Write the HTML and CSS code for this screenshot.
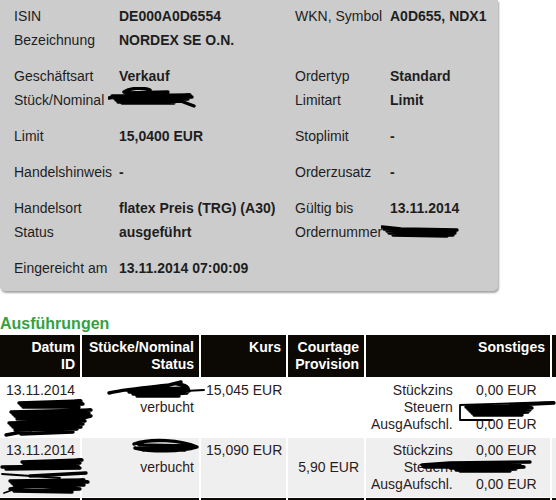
FILE: index.html
```html
<!DOCTYPE html>
<html lang="de">
<head>
    <meta charset="UTF-8">
    <meta name="viewport" content="width=device-width, initial-scale=1.0">
    <title>Orderdetails</title>
    <link rel="stylesheet" href="styles.css">
</head>
<body>
    <!-- Order details -->
    <div class="order-box">
        <table class="details">
            <colgroup>
                <col class="col-label">
                <col class="col-value">
                <col class="col-label2">
                <col class="col-value2">
            </colgroup>
            <tr>
                <td>ISIN</td>
                <td class="value">DE000A0D6554</td>
                <td>WKN, Symbol</td>
                <td class="value">A0D655, NDX1</td>
            </tr>
            <tr>
                <td>Bezeichnung</td>
                <td class="value">NORDEX SE O.N.</td>
                <td></td>
                <td></td>
            </tr>
            <tr class="group-start">
                <td>Geschäftsart</td>
                <td class="value">Verkauf</td>
                <td>Ordertyp</td>
                <td class="value">Standard</td>
            </tr>
            <tr>
                <td>Stück/Nominal</td>
                <td class="value">
                    <span class="redacted">
                        <svg class="scribble s-nominal" width="88" height="21" viewBox="0 0 88 21">
                            <path d="M1 11 L12 9 M16 5 C22 1, 34 0, 42 3 M4 9 L82 8 L6 11 L84 10 L8 13 L80 12 L10 15 L76 14 L14 16 L66 16 M18 6 L60 5 M70 13 L86 19" />
                        </svg>
                    </span>
                </td>
                <td>Limitart</td>
                <td class="value">Limit</td>
            </tr>
            <tr class="group-start">
                <td>Limit</td>
                <td class="value">15,0400 EUR</td>
                <td>Stoplimit</td>
                <td class="value">-</td>
            </tr>
            <tr class="group-start">
                <td>Handelshinweis</td>
                <td class="value">-</td>
                <td>Orderzusatz</td>
                <td class="value">-</td>
            </tr>
            <tr class="group-start">
                <td>Handelsort</td>
                <td class="value">flatex Preis (TRG) (A30)</td>
                <td>Gültig bis</td>
                <td class="value">13.11.2014</td>
            </tr>
            <tr>
                <td>Status</td>
                <td class="value">ausgeführt</td>
                <td>Ordernummer</td>
                <td class="value">
                    <span class="redacted">
                        <svg class="scribble s-ordernr" width="78" height="14" viewBox="0 0 78 14">
                            <path d="M1 2 L20 4 L76 5 M3 4 L74 6 L6 6 L74 8 L8 8 L72 10 L12 10 L66 11" />
                        </svg>
                    </span>
                </td>
            </tr>
            <tr class="group-start">
                <td>Eingereicht am</td>
                <td class="value">13.11.2014 07:00:09</td>
                <td></td>
                <td></td>
            </tr>
        </table>
    </div>

    <!-- Executions -->
    <h3 class="section-title">Ausführungen</h3>
    <table class="executions">
        <colgroup>
            <col class="col-date">
            <col class="col-amount">
            <col class="col-rate">
            <col class="col-fee">
            <col class="col-extras">
            <col class="col-more">
        </colgroup>
        <thead>
            <tr>
                <th>Datum<br>ID</th>
                <th>Stücke/Nominal<br>Status</th>
                <th>Kurs</th>
                <th>Courtage<br>Provision</th>
                <th>Sonstiges</th>
                <th></th>
            </tr>
        </thead>
        <tbody>
            <tr>
                <td>
                    13.11.2014
                    <span class="redacted">
                        <svg class="scribble s-id1" width="92" height="40" viewBox="0 0 92 40">
                            <path d="M16 5 L78 3 L18 7 L80 6 L20 9 L76 9 M8 14 L88 12 L10 16 L86 15 L12 18 L84 18 L14 21 L80 21 M6 25 L82 23 L8 27 L80 26 L10 29 L78 29 L12 32 L74 31 M3 37 L40 30 L88 18 M18 36 L70 34" />
                        </svg>
                    </span>
                </td>
                <td>
                    <span class="redacted">
                        <svg class="scribble s-amount1" width="98" height="20" viewBox="0 0 98 20">
                            <path d="M2 13 C20 9, 44 7, 62 5 L74 2 M20 10 L80 8 L22 12 L82 11 L26 14 L80 13 L30 16 L72 16 M70 4 C82 5, 84 10, 78 13" />
                            <path class="thin" d="M78 11 L97 10" />
                        </svg>
                    </span>
                    verbucht
                </td>
                <td>15,045 EUR</td>
                <td class="fee"></td>
                <td>
                    <div class="extras">
                        <span>Stückzins</span><span>0,00 EUR</span>
                        <span>Steuern</span>
                        <span class="redacted">
                            <svg class="scribble s-tax1" width="104" height="24" viewBox="0 0 104 24">
                                <path class="thin" d="M8 5 L8 20 L40 20 M8 5 L102 2" />
                                <path d="M14 7 L78 5 L16 9 L80 8 L18 11 L78 10 L20 13 L76 12 L22 15 L70 15 M60 5 L102 3" />
                            </svg>
                        </span>
                        <span>AusgAufschl.</span><span>0,00 EUR</span>
                    </div>
                </td>
                <td></td>
            </tr>
            <tr>
                <td>
                    13.11.2014
                    <span class="redacted">
                        <svg class="scribble s-id2" width="92" height="38" viewBox="0 0 92 38">
                            <path d="M22 4 L82 2 L24 6 L80 5 L26 8 L78 8 M2 9 L76 8 L6 11 L80 10 M30 18 L86 15 M10 23 L84 22 L12 25 L88 24 L14 27 L84 27 M10 31 C30 27, 60 28, 80 31 L14 33 L72 34" />
                            <path class="thin" d="M2 16 L60 20 M4 35 L40 22" />
                        </svg>
                    </span>
                </td>
                <td>
                    <span class="redacted">
                        <svg class="scribble s-amount2" width="68" height="19" viewBox="0 0 68 19">
                            <path d="M3 6 C20 0, 50 2, 66 9 C50 14, 20 14, 4 10 M8 7 L60 8 L10 10 L58 10 L12 12 L54 12" />
                        </svg>
                    </span>
                    verbucht
                </td>
                <td>15,090 EUR</td>
                <td class="fee">5,90 EUR</td>
                <td>
                    <div class="extras">
                        <span>Stückzins</span><span>0,00 EUR</span>
                        <span>Steuern</span>
                        <span class="redacted">
                            <svg class="scribble s-tax2" width="114" height="14" viewBox="0 0 114 14">
                                <path d="M2 6 L30 4 L110 3 M4 8 L100 6 L30 9 L104 8 L36 11 L96 10 L40 12 L90 12" />
                            </svg>
                        </span>
                        <span>AusgAufschl.</span><span>0,00 EUR</span>
                    </div>
                </td>
                <td></td>
            </tr>
        </tbody>
        <tfoot>
            <tr>
                <td></td><td></td><td></td><td></td><td></td><td></td>
            </tr>
        </tfoot>
    </table>
</body>
</html>
```

FILE: styles.css
```css
* {
    margin: 0;
    padding: 0;
    box-sizing: border-box;
    font-family: 'Liberation Sans', Arial, sans-serif;
}

html, body {
    overflow: hidden;
}

body {
    background-color: #fff;
    color: #1e1e1e;
    font-size: 14px;
}

/* Order details box */
.order-box {
    width: 498px;
    background-color: #cccccc;
    border-radius: 0 0 5px 5px;
    box-shadow: 1px 2px 2px rgba(0, 0, 0, 0.35);
    padding: 4px 0 11px 14px;
}

.details {
    border-collapse: collapse;
    table-layout: fixed;
    width: 484px;
}

.col-label { width: 105px; }
.col-value { width: 176px; }
.col-label2 { width: 95px; }
.col-value2 { width: 108px; }

.details td {
    line-height: 24px;
    padding: 0;
    white-space: nowrap;
    vertical-align: top;
}

.details .group-start td {
    padding-top: 12px;
}

.details .value {
    font-weight: bold;
}

.details .redacted {
    display: block;
    height: 24px;
}

/* redaction scribbles */
.redacted {
    position: relative;
}

.scribble {
    position: absolute;
    fill: none;
    stroke: #000;
    stroke-width: 3.4;
    stroke-linecap: round;
    stroke-linejoin: round;
}

.scribble .thin {
    stroke-width: 1.8;
}

.s-nominal { left: -11px; top: -1px; }
.s-ordernr { left: -9px; top: 5px; }
.s-id1 { left: -2px; top: -1px; }
.s-amount1 { left: 20px; top: -2px; }
.s-tax1 { left: -1px; top: 1px; }
.s-id2 { left: -5px; top: -1px; }
.s-amount2 { left: 44px; top: -4px; }
.s-tax2 { left: -33px; top: 0; }

/* Executions */
.section-title {
    color: #37a03f;
    font-size: 16px;
    line-height: 19px;
    font-weight: bold;
    margin: 23px 0 2px;
}

.executions {
    border-collapse: separate;
    border-spacing: 0;
    table-layout: fixed;
    width: 556px;
}

.col-date { width: 82px; }
.col-amount { width: 119px; }
.col-rate { width: 87px; }
.col-fee { width: 78px; }
.col-extras { width: 186px; }
.col-more { width: 4px; }

.executions th,
.executions td {
    padding: 4px 5px;
    line-height: 17px;
    text-align: right;
    vertical-align: top;
    white-space: nowrap;
    border-right: 2px solid #fff;
    border-bottom: 1px solid #fff;
}

.executions th:last-child,
.executions td:last-child {
    padding: 0;
    border-right: 0;
}

.executions th {
    background-color: #0c0904;
    color: #fff;
    font-weight: bold;
}

.executions td {
    color: #2b1c1c;
}

.executions tbody tr:nth-child(even) td {
    background-color: #efefef;
}

.executions td.fee {
    vertical-align: middle;
}

.executions td .redacted {
    display: block;
    height: 17px;
}

.extras {
    display: inline-grid;
    grid-template-columns: auto 84px;
    margin-right: 9px;
}

.extras .redacted {
    display: block;
}

.executions tfoot td {
    background-color: #0c0904;
    height: 26px;
}
```
